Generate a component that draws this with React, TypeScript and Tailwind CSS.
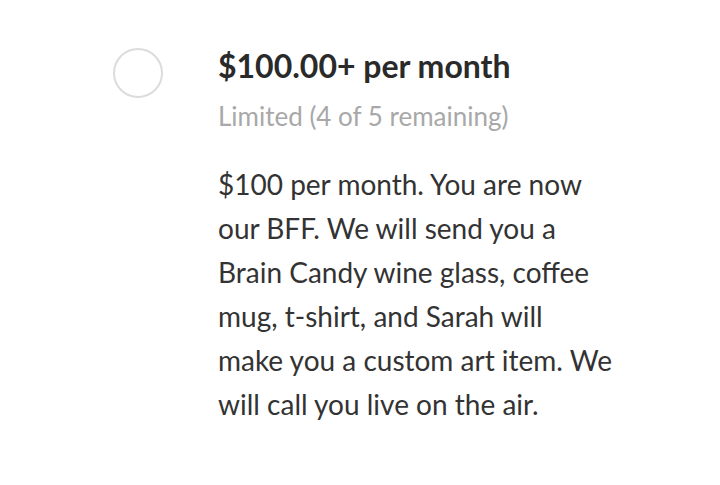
export default function App() {
  return (
    <div className="w-[720px] h-[485px] bg-white" style={{ fontFamily: 'Lato, "Liberation Sans", sans-serif' }}>
      <div className="flex pt-[48px] pl-[113px]">
        <div className="w-[50px] h-[50px] rounded-full border-2 border-[#dcdcdc] shrink-0" />
        <div className="ml-[55px] w-[394px]">
          <h2 className="text-[32px] leading-[38px] font-bold text-[#2a2a2a] -mt-[1px]">$100.00+ per month</h2>
          <p className="mt-[14px] text-[26px] leading-[34px] text-[#a8a8a8]">Limited (4 of 5 remaining)</p>
          <p className="mt-[29px] text-[28px] leading-[44px] text-[#333333]">
            $100 per month. You are now our BFF. We will send you a Brain Candy wine glass, coffee mug, t-shirt, and Sarah will make you a custom art item. We will call you live on the air.
          </p>
        </div>
      </div>
    </div>
  );
}
